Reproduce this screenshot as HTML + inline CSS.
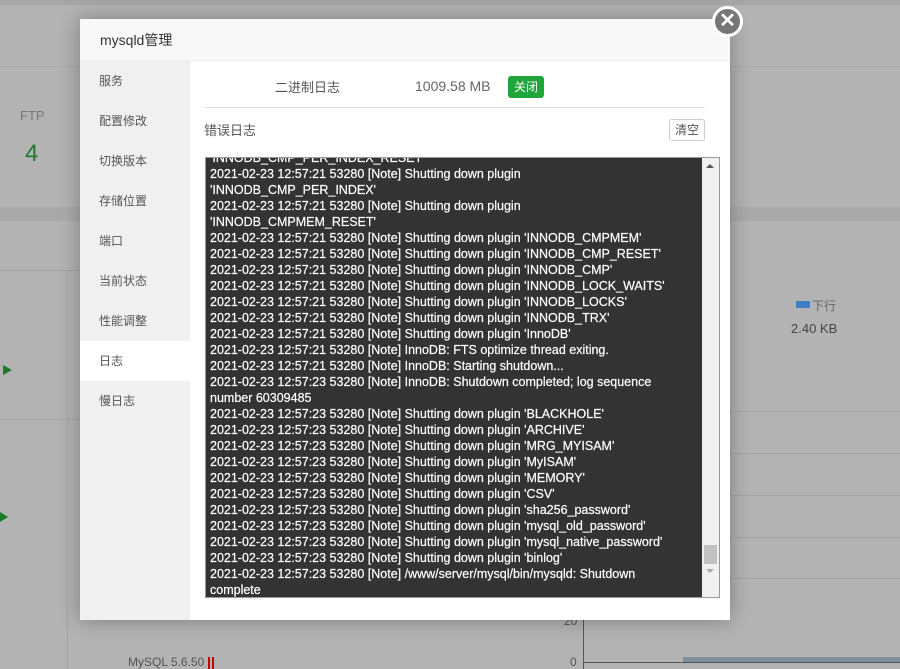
<!DOCTYPE html>
<html><head><meta charset="utf-8"><style>
*{margin:0;padding:0;box-sizing:border-box}
body{width:900px;height:669px;overflow:hidden;background:#b3b3b3;font-family:"Liberation Sans","Noto Sans CJK SC",sans-serif;position:relative}
.abs{position:absolute}
.dlg{left:80px;top:19px;width:650px;height:601px;background:#fff;box-shadow:0 0 20px rgba(0,0,0,.3)}
.hd{left:0;top:0;width:650px;height:42px;background:#f8f8f8;border-bottom:1px solid #eee;font-size:14px;color:#333;line-height:42px;padding-left:20px}
.sb{left:0;top:42px;width:110px;height:559px;background:#f0f0f0}
.sb div{height:40px;line-height:40px;padding-left:19px;font-size:12px;color:#555}
.sb .on{background:#fff}
.log{left:125px;top:138px;width:515px;height:441px;background:#333;border:1px solid #999;overflow:hidden}
.txt{position:absolute;left:4px;top:-8px;color:#fff;font-size:12.5px;line-height:16px;white-space:nowrap;-webkit-text-stroke:0.2px #fff}
.scr{position:absolute;right:0;top:0;width:17px;height:100%;background:#f0f0f0}
</style></head><body>
<div class="abs" style="left:0;top:0;width:900px;height:5px;background:#a6a6a6"></div>
<div class="abs" style="left:0;top:66px;width:900px;height:1px;background:#a8a8a8"></div>
<div class="abs" style="left:0;top:207px;width:900px;height:14px;background:#aaa"></div>
<div class="abs" style="left:20px;top:108px;font-size:13px;color:#777">FTP</div>
<div class="abs" style="left:25px;top:140px;font-size:24px;color:#1f7a30">4</div>
<div class="abs" style="left:0;top:270px;width:80px;height:1px;background:#a5a5a5"></div>
<div class="abs" style="left:0;top:419px;width:80px;height:1px;background:#a5a5a5"></div>
<div class="abs" style="left:67px;top:270px;width:1px;height:399px;background:#a5a5a5"></div>
<div class="abs" style="left:3px;top:365px;width:0;height:0;border-left:9px solid #1a7a2a;border-top:5px solid transparent;border-bottom:5px solid transparent"></div>
<div class="abs" style="left:0;top:512px;width:0;height:0;border-left:8px solid #1a7a2a;border-top:5px solid transparent;border-bottom:5px solid transparent"></div>
<div class="abs" style="left:128px;top:655px;font-size:12px;color:#555">MySQL 5.6.50</div>
<div class="abs" style="left:208px;top:657px;width:6px;height:12px;border-left:2px solid #c00;border-right:2px solid #c00"></div>
<div class="abs" style="left:796px;top:301px;width:14px;height:7px;background:#3d7ec4"></div>
<div class="abs" style="left:812px;top:297px;font-size:12px;color:#666">下行</div>
<div class="abs" style="left:791px;top:321px;font-size:13px;color:#444">2.40 KB</div>
<div class="abs" style="left:730px;top:411px;width:170px;height:1px;background:#a3a3a3"></div>
<div class="abs" style="left:730px;top:453px;width:170px;height:1px;background:#a3a3a3"></div>
<div class="abs" style="left:730px;top:495px;width:170px;height:1px;background:#a3a3a3"></div>
<div class="abs" style="left:730px;top:537px;width:170px;height:1px;background:#a3a3a3"></div>
<div class="abs" style="left:730px;top:578px;width:170px;height:1px;background:#a3a3a3"></div>
<div class="abs" style="left:564px;top:614px;font-size:12px;color:#555">20</div>
<div class="abs" style="left:570px;top:655px;font-size:12px;color:#555">0</div>
<div class="abs" style="left:583px;top:620px;width:1px;height:49px;background:#555"></div>
<div class="abs" style="left:583px;top:662px;width:317px;height:1px;background:#555"></div>
<div class="abs" style="left:683px;top:657px;width:217px;height:5px;background:#7d8e9c"></div>

<div class="abs dlg">
<div class="abs hd">mysqld管理</div>
<div class="abs sb">
<div>服务</div><div>配置修改</div><div>切换版本</div><div>存储位置</div><div>端口</div><div>当前状态</div><div>性能调整</div><div class="on">日志</div><div>慢日志</div>
</div>
<div class="abs" style="left:195px;top:58px;font-size:13px;color:#555">二进制日志</div>
<div class="abs" style="left:335px;top:59px;font-size:14px;color:#666">1009.58 MB</div>
<div class="abs" style="left:428px;top:57px;width:36px;height:22px;background:#20a53a;border-radius:3px;color:#fff;font-size:12px;line-height:22px;text-align:center">关闭</div>
<div class="abs" style="left:125px;top:88px;width:500px;height:1px;background:#ddd"></div>
<div class="abs" style="left:124px;top:101px;font-size:13px;color:#555">错误日志</div>
<div class="abs" style="left:589px;top:100px;width:36px;height:22px;border:1px solid #ccc;border-radius:3px;font-size:12px;line-height:20px;text-align:center;color:#555">清空</div>
<div class="abs log">
<div class="txt">'INNODB_CMP_PER_INDEX_RESET'<br>
2021-02-23 12:57:21 53280 [Note] Shutting down plugin<br>
'INNODB_CMP_PER_INDEX'<br>
2021-02-23 12:57:21 53280 [Note] Shutting down plugin<br>
'INNODB_CMPMEM_RESET'<br>
2021-02-23 12:57:21 53280 [Note] Shutting down plugin 'INNODB_CMPMEM'<br>
2021-02-23 12:57:21 53280 [Note] Shutting down plugin 'INNODB_CMP_RESET'<br>
2021-02-23 12:57:21 53280 [Note] Shutting down plugin 'INNODB_CMP'<br>
2021-02-23 12:57:21 53280 [Note] Shutting down plugin 'INNODB_LOCK_WAITS'<br>
2021-02-23 12:57:21 53280 [Note] Shutting down plugin 'INNODB_LOCKS'<br>
2021-02-23 12:57:21 53280 [Note] Shutting down plugin 'INNODB_TRX'<br>
2021-02-23 12:57:21 53280 [Note] Shutting down plugin 'InnoDB'<br>
2021-02-23 12:57:21 53280 [Note] InnoDB: FTS optimize thread exiting.<br>
2021-02-23 12:57:21 53280 [Note] InnoDB: Starting shutdown...<br>
2021-02-23 12:57:23 53280 [Note] InnoDB: Shutdown completed; log sequence<br>
number 60309485<br>
2021-02-23 12:57:23 53280 [Note] Shutting down plugin 'BLACKHOLE'<br>
2021-02-23 12:57:23 53280 [Note] Shutting down plugin 'ARCHIVE'<br>
2021-02-23 12:57:23 53280 [Note] Shutting down plugin 'MRG_MYISAM'<br>
2021-02-23 12:57:23 53280 [Note] Shutting down plugin 'MyISAM'<br>
2021-02-23 12:57:23 53280 [Note] Shutting down plugin 'MEMORY'<br>
2021-02-23 12:57:23 53280 [Note] Shutting down plugin 'CSV'<br>
2021-02-23 12:57:23 53280 [Note] Shutting down plugin 'sha256_password'<br>
2021-02-23 12:57:23 53280 [Note] Shutting down plugin 'mysql_old_password'<br>
2021-02-23 12:57:23 53280 [Note] Shutting down plugin 'mysql_native_password'<br>
2021-02-23 12:57:23 53280 [Note] Shutting down plugin 'binlog'<br>
2021-02-23 12:57:23 53280 [Note] /www/server/mysql/bin/mysqld: Shutdown<br>
complete</div>
<div class="scr">
<div style="position:absolute;left:4px;top:6px;width:0;height:0;border-bottom:4px solid #555;border-left:4px solid transparent;border-right:4px solid transparent"></div>
<div style="position:absolute;left:2px;top:387px;width:13px;height:19px;background:#c1c1c1"></div>
<div style="position:absolute;left:4px;top:411px;width:0;height:0;border-top:4px solid #aaa;border-left:4px solid transparent;border-right:4px solid transparent"></div>
</div>
</div>
</div>
<div class="abs" style="left:712px;top:6px;width:31px;height:31px;border-radius:50%;background:#777;border:3px solid #fff;color:#fff;font-size:20px;line-height:24px;text-align:center;font-weight:bold">✕</div>
</body></html>
